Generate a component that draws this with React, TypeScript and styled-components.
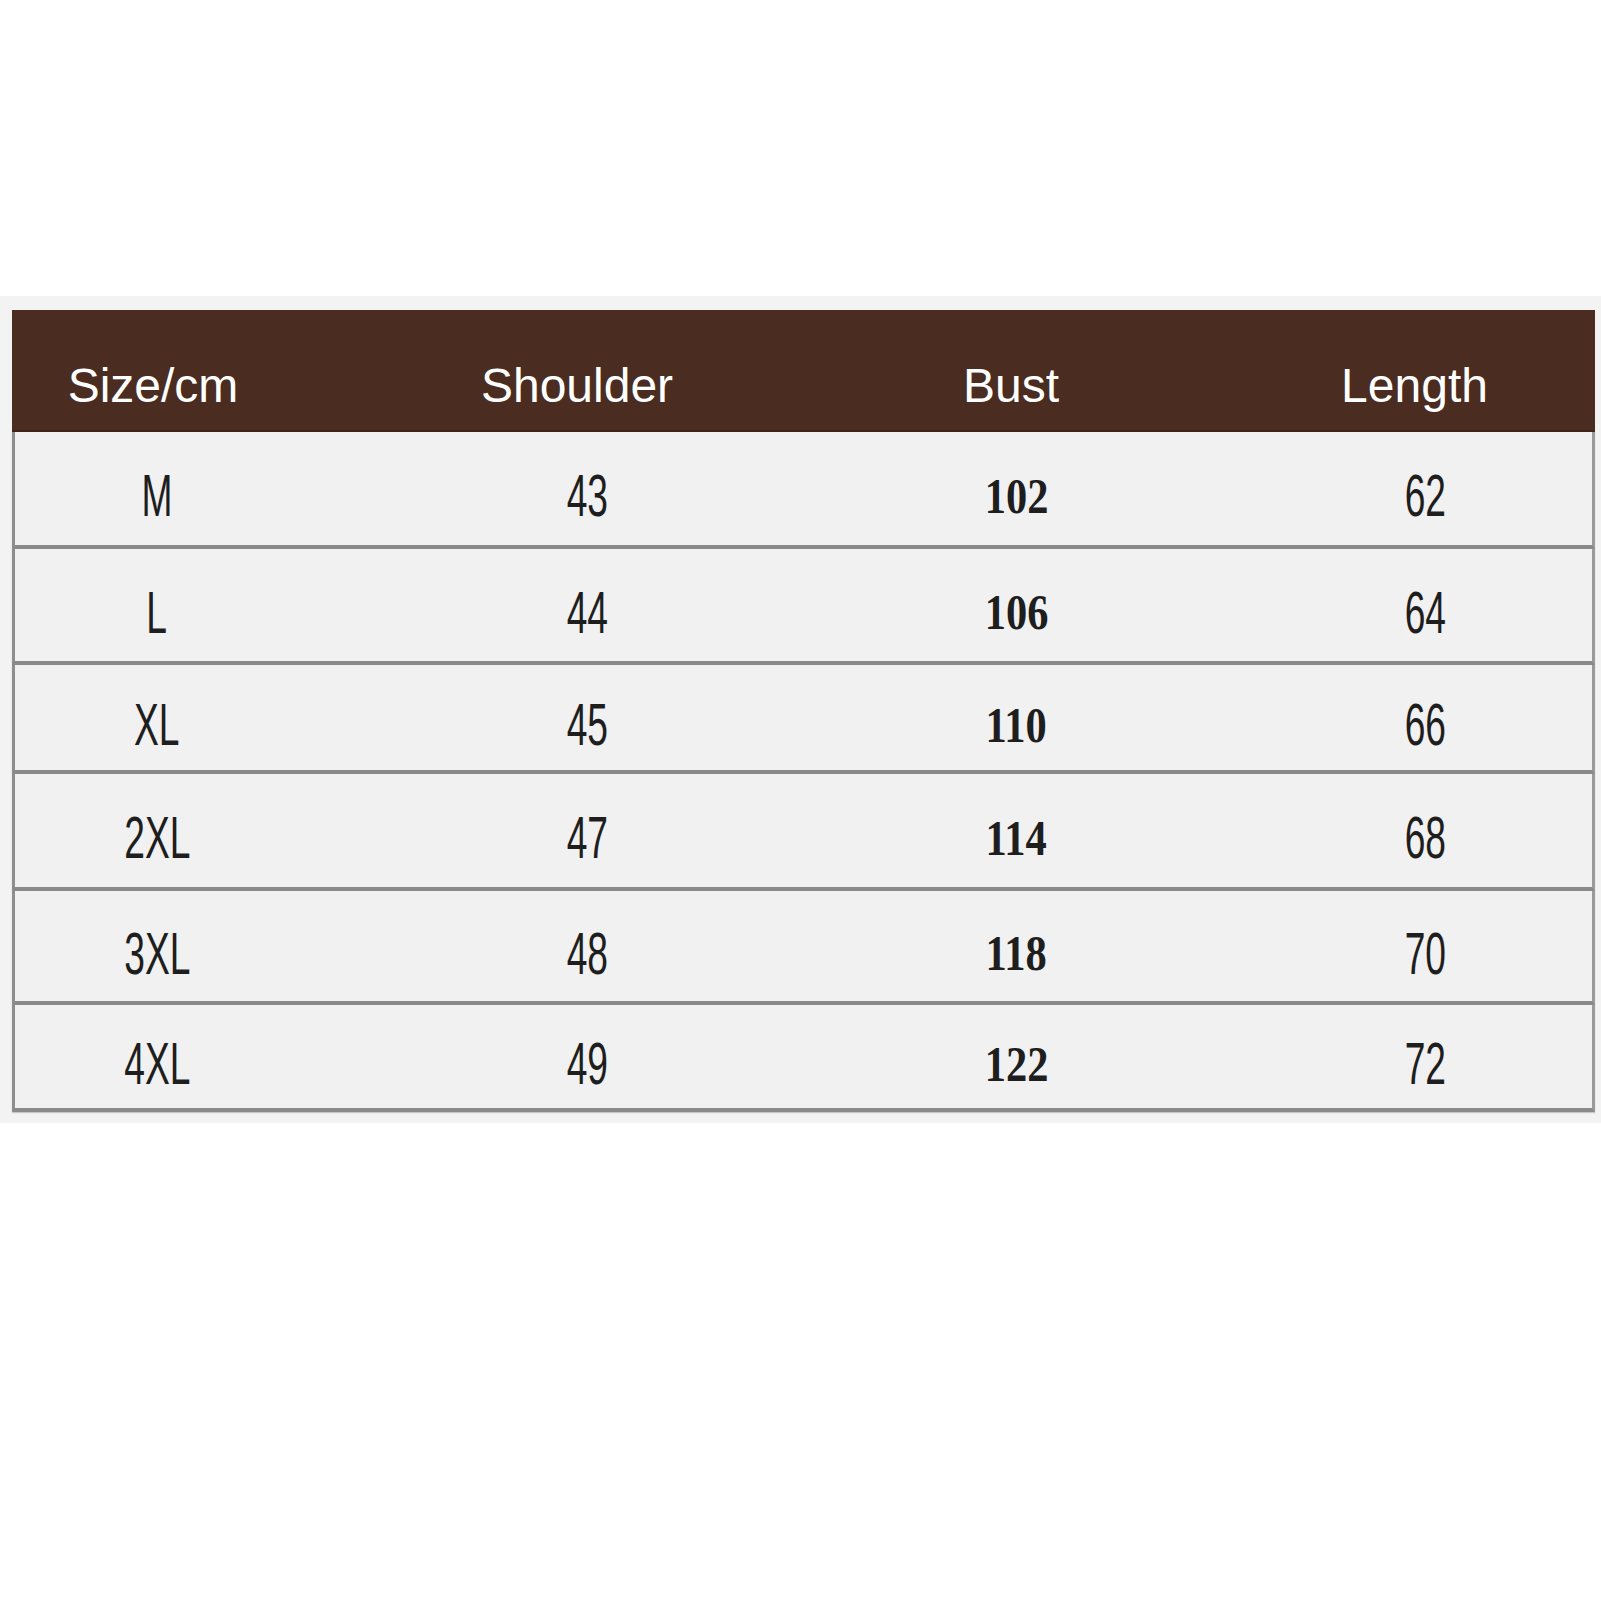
import React from 'react';
import styled, { createGlobalStyle } from 'styled-components';

const GlobalStyle = createGlobalStyle`
  html, body {
    margin: 0;
    padding: 0;
    background: #ffffff;
  }
`;

const Page = styled.div`
  width: 1601px;
  height: 1601px;
  padding-top: 296px;
  box-sizing: border-box;
  background: #ffffff;
`;

const Panel = styled.div`
  width: 1601px;
  box-sizing: border-box;
  padding: 14px 0 11px 12px;
  background: #f3f3f3;
`;

const Table = styled.div`
  width: 1583px;
  display: flex;
  flex-direction: column;
`;

const columns = '276px 554px 296px 457px';

const HeaderRow = styled.div`
  display: grid;
  grid-template-columns: ${columns};
  height: 122px;
  background: #4a2c21;
  box-shadow: inset 0 -2px 0 #3f241b;
`;

const HeaderCell = styled.div<{ $pad: number }>`
  display: flex;
  align-items: center;
  justify-content: center;
  padding: 28px 0 0 ${p => p.$pad}px;
  font-family: 'Liberation Sans', Arial, sans-serif;
  font-size: 48px;
  color: #ffffff;
`;

const BodyRow = styled.div<{ $height: number }>`
  display: grid;
  grid-template-columns: ${columns};
  height: ${p => p.$height}px;
  background: #f1f1f1;
  border-left: 3px solid #8e8e8e;
  border-right: 3px solid #9a9a9a;
  border-bottom: 4px solid #8a8a8a;
  box-shadow: 0 1px 1px rgba(0, 0, 0, 0.18);
`;

const BodyCell = styled.div<{ $pad: number }>`
  display: flex;
  align-items: center;
  justify-content: center;
  padding: 14px 0 0 ${p => p.$pad}px;
`;

const Narrow = styled.span`
  display: inline-block;
  font-family: 'Liberation Sans', Arial, sans-serif;
  font-size: 60px;
  color: #1e1e1e;
  transform: scaleX(0.62);
`;

const SerifNum = styled.span`
  display: inline-block;
  font-family: 'Liberation Serif', 'Times New Roman', serif;
  font-weight: bold;
  font-size: 50px;
  color: #1e1e1e;
  transform: scaleX(0.85);
`;

const headers = ['Size/cm', 'Shoulder', 'Bust', 'Length'];
const headerPads = [6, 24, 42, 96];
const bodyPads = [8, 38, 46, 112];

const rows = [
  { size: 'M', shoulder: '43', bust: '102', length: '62', height: 113 },
  { size: 'L', shoulder: '44', bust: '106', length: '64', height: 112 },
  { size: 'XL', shoulder: '45', bust: '110', length: '66', height: 105 },
  { size: '2XL', shoulder: '47', bust: '114', length: '68', height: 113 },
  { size: '3XL', shoulder: '48', bust: '118', length: '70', height: 110 },
  { size: '4XL', shoulder: '49', bust: '122', length: '72', height: 103 },
];

export default function App() {
  return (
    <Page>
      <GlobalStyle />
      <Panel>
        <Table>
          <HeaderRow>
            {headers.map((h, i) => (
              <HeaderCell key={h} $pad={headerPads[i]}>
                {h}
              </HeaderCell>
            ))}
          </HeaderRow>
          {rows.map(r => (
            <BodyRow key={r.size} $height={r.height}>
              <BodyCell $pad={bodyPads[0]}>
                <Narrow>{r.size}</Narrow>
              </BodyCell>
              <BodyCell $pad={bodyPads[1]}>
                <Narrow>{r.shoulder}</Narrow>
              </BodyCell>
              <BodyCell $pad={bodyPads[2]}>
                <SerifNum>{r.bust}</SerifNum>
              </BodyCell>
              <BodyCell $pad={bodyPads[3]}>
                <Narrow>{r.length}</Narrow>
              </BodyCell>
            </BodyRow>
          ))}
        </Table>
      </Panel>
    </Page>
  );
}
